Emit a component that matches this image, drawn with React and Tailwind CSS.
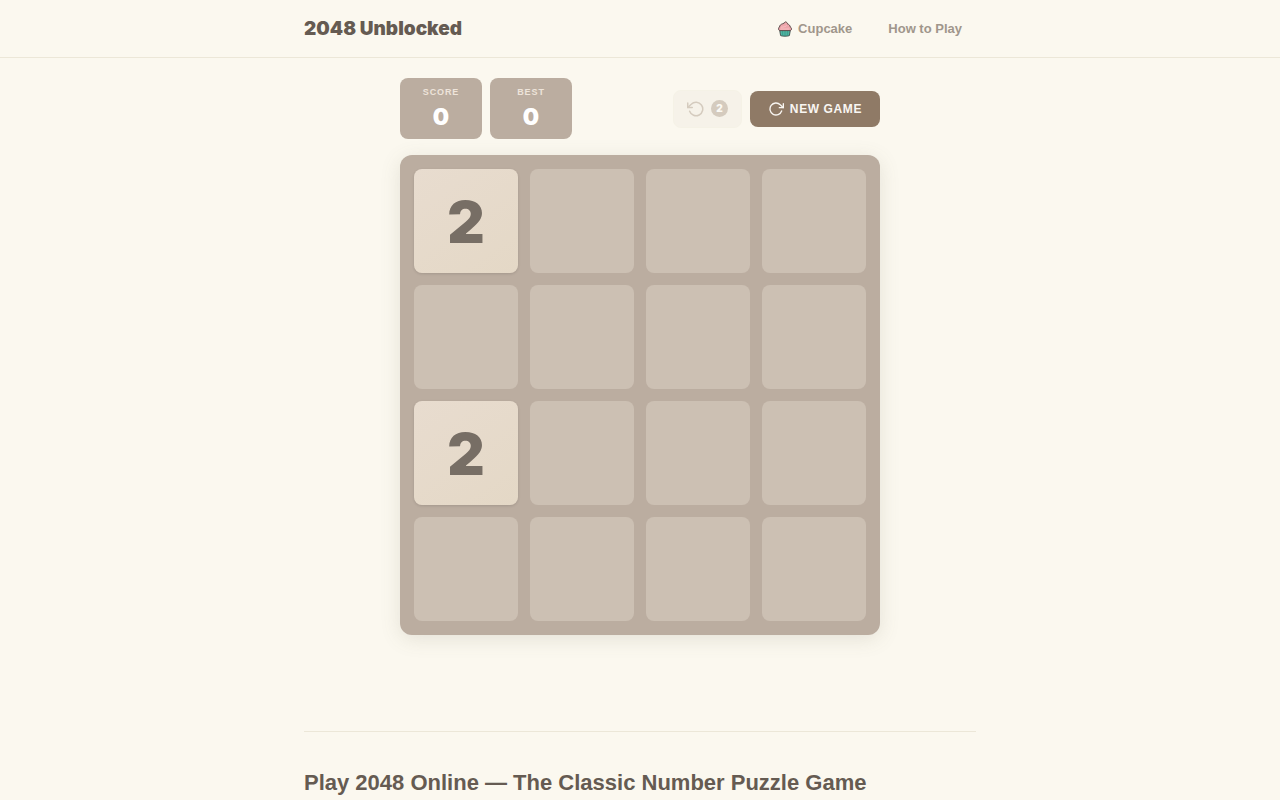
import React, { useState } from 'react';
import { FiRotateCcw, FiRotateCw } from 'react-icons/fi';

const START_TILES = [
  [2, 0, 0, 0],
  [0, 0, 0, 0],
  [2, 0, 0, 0],
  [0, 0, 0, 0]
];

const CupcakeIcon = () => (
  <svg width="14" height="16" viewBox="0 0 14 16" aria-hidden="true">
    <path d="M1.6 8.6h10.8l-1 6c-1.6.8-7.200.8-8.800 0z" fill="#4fb5a2" stroke="#465a55" strokeWidth="1" strokeLinejoin="round" />
    <path d="M4.6 10v4.800M7 10v4.900M9.400 10v4.800" stroke="#2f8f80" strokeWidth="0.6" />
    <path d="M1.500 9.600C.3 9 .2 6.700 1.500 6 1.600 4.300 2.900 3.300 4.300 2.900 5.500 2.500 6.600 2 7.400.9 8.900 1.200 9.600 2.100 9.500 3 11 3.400 12.100 4.500 12.200 5.900 13.800 6.500 13.900 9 12.500 9.600z" fill="#eea5ab" stroke="#5d4a4a" strokeWidth="1" strokeLinejoin="round" />
    <path d="M3 6.200c2.600 0 4.600-.6 5.600-1.800M2.400 8h8.800" fill="none" stroke="#f8c8ca" strokeWidth="0.7" />
  </svg>
);

const ScoreBox = ({ label, value }) => (
  <div className="min-w-[82px] px-4 py-2 rounded-lg bg-[#bbada0] text-center">
    <div className="text-[9px] leading-[13px] font-semibold tracking-widest uppercase text-[#eee4da]">{label}</div>
    <div className="pt-1 font-[Inter,sans-serif] text-[23px] leading-[28px] font-black text-white">{value}</div>
  </div>
);

const Tile = ({ value }) => {
  if (!value) {
    return <div className="aspect-square rounded-lg bg-[#ccc0b3]" />;
  }
  return (
    <div className="aspect-square rounded-lg flex items-center justify-center bg-linear-[145deg] from-[#e8dccf] to-[#e4d8c6] shadow-[0_1px_3px_rgba(0,0,0,0.12)]">
      <span className="pt-0.5 font-[Inter,sans-serif] text-[58px] leading-none font-black text-[#776e65]">{value}</span>
    </div>
  );
};

const App = () => {
  const [tiles, setTiles] = useState(START_TILES);
  const [undosLeft, setUndosLeft] = useState(2);

  const newGame = () => {
    setTiles(START_TILES);
    setUndosLeft(2);
  };

  return (
    <div className="min-h-screen bg-[#fbf8ef] text-[#655b52] font-['Liberation_Sans',Arial,sans-serif]">
      <header className="border-b border-[#ece7d8]">
        <div className="max-w-[720px] mx-auto px-6 py-3 flex items-center justify-between">
          <a href="#" className="font-[Inter,sans-serif] text-[19px] leading-6 font-black">2048 Unblocked</a>
          <nav className="flex items-center gap-2 text-[13px] leading-[17px] font-semibold text-[#a0968b]">
            <a href="#cupcake" className="px-3.5 py-2 flex items-center gap-1.5 rounded-md">
              <CupcakeIcon />
              Cupcake
            </a>
            <a href="#how-to-play" className="px-3.5 py-2 rounded-md">How to Play</a>
          </nav>
        </div>
      </header>

      <main>
        <section className="max-w-[480px] mx-auto pt-5">
          <div className="flex items-center justify-between mb-4">
            <div className="flex gap-2">
              <ScoreBox label="Score" value={0} />
              <ScoreBox label="Best" value={0} />
            </div>
            <div className="flex items-center gap-2">
              <button
                type="button"
                aria-label="Undo"
                disabled
                className="h-[38px] px-[13px] flex items-center gap-1.5 rounded-lg border border-[#ece7d8] bg-[#eee9e0] text-[#8f7a66] opacity-35"
              >
                <FiRotateCcw size={18} />
                <span className="w-[17px] h-[17px] rounded-full bg-[#8f7a66] text-white font-[Inter,sans-serif] text-[10px] leading-[17px] font-black text-center">
                  {undosLeft}
                </span>
              </button>
              <button
                type="button"
                onClick={newGame}
                className="h-9 px-[18px] flex items-center gap-1.5 rounded-lg bg-[#8f7a66] text-[#f9f6f2] text-[12px] font-bold tracking-wider uppercase"
              >
                <FiRotateCw size={16} />
                New Game
              </button>
            </div>
          </div>

          <div className="grid grid-cols-4 gap-3 p-3.5 rounded-xl bg-[#bbada0] shadow-[0_4px_20px_rgba(100,100,80,0.15)]">
            {tiles.flat().map((value, i) => (
              <Tile key={i} value={value} />
            ))}
          </div>
        </section>

        <div className="max-w-[720px] mx-auto px-6 pt-24">
          <section className="border-t border-[#ece7d8] pt-9">
            <h2 className="text-[22px] leading-[30px] font-bold">Play 2048 Online — The Classic Number Puzzle Game</h2>
          </section>
        </div>
      </main>
    </div>
  );
};

export default App;
